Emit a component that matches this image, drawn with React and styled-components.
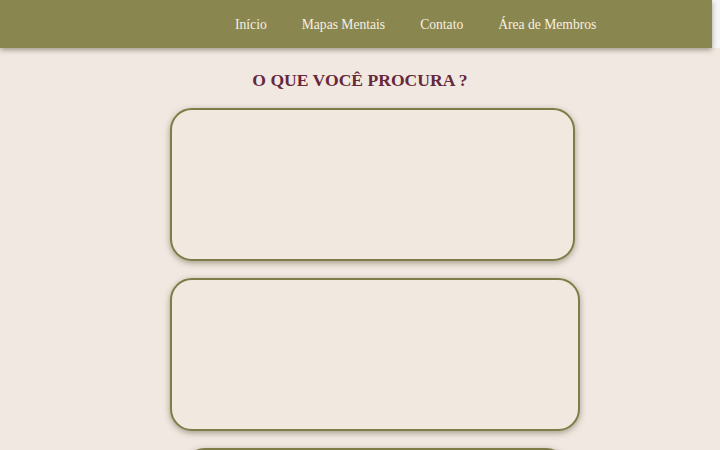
import React from 'react';
import styled, { createGlobalStyle } from 'styled-components';

const GlobalStyle = createGlobalStyle`
  html, body {
    margin: 0;
    padding: 0;
    background: #f1e9e1;
    overflow: hidden;
  }
  body {
    font-family: "DejaVu Serif", "Liberation Serif", serif;
  }
`;

const colors = {
  olive: '#8a8650',
  oliveDark: '#807c47',
  cream: '#f6f0e0',
  bg: '#f1e9e1',
  card: '#f1e9e0',
  maroon: '#66283a',
};

const Page = styled.div`
  width: 720px;
  height: 450px;
  background: ${colors.bg};
  display: flex;
  flex-direction: column;
  overflow: hidden;
`;

const TopStrip = styled.div`
  display: flex;
  background: #f6f5f7;
`;

const Header = styled.header`
  width: 712px;
  height: 48px;
  background: ${colors.olive};
  box-shadow: 0 2px 5px rgba(60, 55, 30, 0.45);
  display: flex;
  align-items: center;
  padding: 2px 0 0 235px;
  box-sizing: border-box;
  gap: 35px;
  position: relative;
  z-index: 1;
`;

const NavLink = styled.a`
  font-family: "Liberation Serif", serif;
  font-size: 13.6px;
  color: ${colors.cream};
  text-decoration: none;
`;

const Main = styled.main`
  display: flex;
  flex-direction: column;
  align-items: center;
  padding-top: 21px;
`;

const Title = styled.h1`
  margin: 0 0 17px 0;
  font-family: "Liberation Serif", serif;
  font-weight: bold;
  font-size: 17.6px;
  color: ${colors.maroon};
  line-height: 22px;
`;

const Cards = styled.div`
  display: flex;
  flex-direction: column;
  gap: 17px;
  width: 100%;
`;

const Card = styled.div`
  box-sizing: border-box;
  margin-left: ${p => p.$left}px;
  width: ${p => p.$width}px;
  height: 153px;
  flex-shrink: 0;
  background: ${colors.card};
  border: 2px solid ${colors.oliveDark};
  border-radius: 22px;
  box-shadow: 0 2px 6px rgba(70, 60, 30, 0.45);
`;

const navItems = ['Início', 'Mapas Mentais', 'Contato', 'Área de Membros'];

const cards = [
  { left: 170, width: 405 },
  { left: 170, width: 410 },
  { left: 183, width: 385 },
];

const App = () => {
  return (
    <Page>
      <GlobalStyle />
      <TopStrip>
        <Header>
          {navItems.map(item => (
            <NavLink key={item} href="#">{item}</NavLink>
          ))}
        </Header>
      </TopStrip>
      <Main>
        <Title>O QUE VOCÊ PROCURA ?</Title>
        <Cards>
          {cards.map((c, i) => (
            <Card key={i} $left={c.left} $width={c.width} />
          ))}
        </Cards>
      </Main>
    </Page>
  );
};

export default App;
